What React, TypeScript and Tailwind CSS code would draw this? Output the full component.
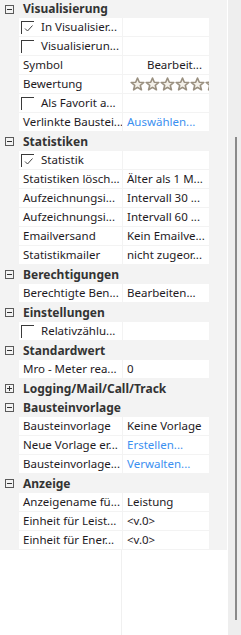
type Row = {
  name: string;
  value?: string;
  check?: boolean;
  checked?: boolean;
  link?: boolean;
  stars?: boolean;
  right?: boolean;
};

type Section = { title: string; open: boolean; rows: Row[] };

const sections: Section[] = [
  {
    title: 'Visualisierung',
    open: true,
    rows: [
      { name: 'In Visualisier...', check: true, checked: true },
      { name: 'Visualisierun...', check: true },
      { name: 'Symbol', value: 'Bearbeit...', right: true },
      { name: 'Bewertung', stars: true },
      { name: 'Als Favorit a...', check: true },
      { name: 'Verlinkte Baustei...', value: 'Auswählen...', link: true },
    ],
  },
  {
    title: 'Statistiken',
    open: true,
    rows: [
      { name: 'Statistik', check: true, checked: true },
      { name: 'Statistiken lösch...', value: 'Älter als 1 M...' },
      { name: 'Aufzeichnungsi...', value: 'Intervall 30 ...' },
      { name: 'Aufzeichnungsi...', value: 'Intervall 60 ...' },
      { name: 'Emailversand', value: 'Kein Emailve...' },
      { name: 'Statistikmailer', value: 'nicht zugeor...' },
    ],
  },
  {
    title: 'Berechtigungen',
    open: true,
    rows: [{ name: 'Berechtigte Ben...', value: 'Bearbeiten...' }],
  },
  {
    title: 'Einstellungen',
    open: true,
    rows: [{ name: 'Relativzählu...', check: true }],
  },
  {
    title: 'Standardwert',
    open: true,
    rows: [{ name: 'Mro - Meter rea...', value: '0' }],
  },
  { title: 'Logging/Mail/Call/Track', open: false, rows: [] },
  {
    title: 'Bausteinvorlage',
    open: true,
    rows: [
      { name: 'Bausteinvorlage', value: 'Keine Vorlage' },
      { name: 'Neue Vorlage er...', value: 'Erstellen...', link: true },
      { name: 'Bausteinvorlage...', value: 'Verwalten...', link: true },
    ],
  },
  {
    title: 'Anzeige',
    open: true,
    rows: [
      { name: 'Anzeigename fü...', value: 'Leistung' },
      { name: 'Einheit für Leist...', value: '<v.0>' },
      { name: 'Einheit für Ener...', value: '<v.0>' },
    ],
  },
];

function Expander({ open }: { open: boolean }) {
  return (
    <svg width="9" height="9" viewBox="0 0 9 9" className="shrink-0">
      <rect x="0.5" y="0.5" width="8" height="8" fill="none" stroke="#5a5a5a" />
      <line x1="2" y1="4.5" x2="7" y2="4.5" stroke="#333" />
      {!open && <line x1="4.5" y1="2" x2="4.5" y2="7" stroke="#333" />}
    </svg>
  );
}

function CheckBox({ checked }: { checked?: boolean }) {
  return (
    <div className="relative h-[13px] w-[13px] shrink-0 border-l border-t border-[#3a3a3a]">
      {checked && (
        <svg width="10" height="9" viewBox="0 0 10 9" className="absolute left-[2px] top-[2px]">
          <path d="M1 4.5 L3.5 7 L8.5 1.5" fill="none" stroke="#444" strokeWidth="1" />
        </svg>
      )}
    </div>
  );
}

function Star() {
  return (
    <svg width="15" height="14" viewBox="0 0 15 14" className="shrink-0">
      <path
        d="M7.5 1 L9.3 5.2 L13.8 5.5 L10.3 8.4 L11.4 12.8 L7.5 10.4 L3.6 12.8 L4.7 8.4 L1.2 5.5 L5.7 5.2 Z"
        fill="#f4f1ea"
        stroke="#9a9080"
        strokeWidth="1.6"
        strokeLinejoin="round"
      />
    </svg>
  );
}

function PropRow({ row }: { row: Row }) {
  return (
    <div className="flex h-[19px] pb-px pl-[19px]">
      <div className="flex w-[103px] items-center overflow-hidden whitespace-nowrap bg-white pl-[4px]">
        {row.check ? (
          <>
            <div className="-ml-[2px] mt-[1px]">
              <CheckBox checked={row.checked} />
            </div>
            <span className="ml-[7px]">{row.name}</span>
          </>
        ) : (
          <span>{row.name}</span>
        )}
      </div>
      <div
        className={
          'ml-px flex w-[86px] items-center overflow-hidden whitespace-nowrap bg-white ' +
          (row.right ? 'justify-end pr-[7px]' : 'pl-[4px]')
        }
      >
        {row.stars ? (
          <div className="flex gap-0 pl-[3px]">
            <Star />
            <Star />
            <Star />
            <Star />
            <Star />
            <Star />
          </div>
        ) : (
          <span className={row.link ? 'text-[#3b8ff0]' : ''}>{row.value}</span>
        )}
      </div>
    </div>
  );
}

export default function App() {
  return (
    <div
      className="flex h-[635px] w-[241px] overflow-hidden bg-white text-[11.5px] leading-none text-[#1e1a1e]"
      style={{ fontFamily: '"Segoe UI", "Noto Sans", Arial, sans-serif' }}
    >
      <div className="flex w-[227px] flex-col">
        <div className="bg-[#f3f3f3]">
          {sections.map((s, i) => (
            <div key={s.title + i}>
              <div className={'flex items-center gap-[9px] pl-[5px] ' + (i === 0 ? 'h-[18px]' : 'h-[19px]')}>
                <Expander open={s.open} />
                <span className="text-[12px] font-bold text-[#333]">{s.title}</span>
              </div>
              {s.rows.map((r, j) => (
                <PropRow key={j} row={r} />
              ))}
            </div>
          ))}
        </div>
        <div className="flex flex-1 bg-white">
          <div className="w-[122px] border-r border-[#f0f0f0]" />
        </div>
      </div>
      <div className="w-px bg-white" />
      <div className="relative flex-1 bg-[#eeeeee]">
        <div className="absolute left-[7px] top-[137px] h-[483px] w-[2px] bg-[#8a8a8a]" />
      </div>
    </div>
  );
}
